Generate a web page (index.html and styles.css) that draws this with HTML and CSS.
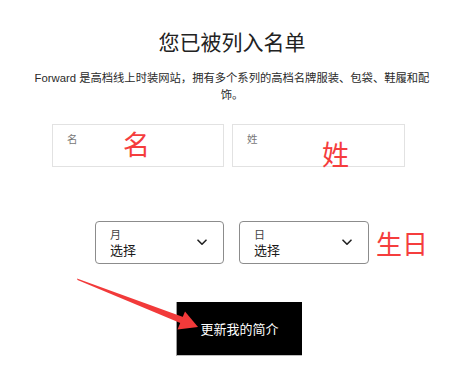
FILE: index.html
```html
<!DOCTYPE html>
<html lang="zh">
<head>
<meta charset="utf-8">
<link rel="stylesheet" href="styles.css">
</head>
<body>
<div class="page">
  <h1 class="title">您已被列入名单</h1>
  <p class="desc">Forward 是高档线上时装网站，拥有多个系列的高档名牌服装、包袋、鞋履和配饰。</p>

  <div class="name-row">
    <div class="field">
      <span class="field-label">名</span>
      <span class="note note-first">名</span>
    </div>
    <div class="field">
      <span class="field-label">姓</span>
      <span class="note note-last">姓</span>
    </div>
  </div>

  <div class="date-row">
    <div class="select">
      <div class="select-text">
        <span class="select-label">月</span>
        <span class="select-value">选择</span>
      </div>
      <svg class="chevron" viewBox="0 0 10 7" width="10" height="7"><polyline points="1,1.2 5,5.2 9,1.2" fill="none" stroke="#222" stroke-width="1.6" stroke-linecap="round" stroke-linejoin="round"/></svg>
    </div>
    <div class="select">
      <div class="select-text">
        <span class="select-label">日</span>
        <span class="select-value">选择</span>
      </div>
      <svg class="chevron" viewBox="0 0 10 7" width="10" height="7"><polyline points="1,1.2 5,5.2 9,1.2" fill="none" stroke="#222" stroke-width="1.6" stroke-linecap="round" stroke-linejoin="round"/></svg>
    </div>
    <span class="note-birthday">生日</span>
  </div>

  <div class="button-row">
    <button class="submit">更新我的简介</button>
  </div>

  <svg class="arrow" width="464" height="370" viewBox="0 0 464 370">
    <polygon points="77,278.5 184.5,317.5 181.5,323.5 77.5,280" fill="#f23a3a"/>
    <polygon points="198,327 185,311.5 177.5,329.5" fill="#f23a3a"/>
  </svg>
</div>
</body>
</html>
```

FILE: styles.css
```css
html, body {
  margin: 0;
  padding: 0;
  background: #fff;
}

body {
  width: 464px;
  height: 370px;
  overflow: hidden;
  font-family: "Liberation Sans", "Noto Sans CJK SC", sans-serif;
  color: #222;
}

.page {
  position: relative;
  width: 464px;
  height: 370px;
  display: flex;
  flex-direction: column;
}

.title {
  margin: 27px 0 0;
  font-size: 21px;
  line-height: 28px;
  font-weight: normal;
  text-align: center;
  color: #222;
  font-family: "Noto Sans CJK SC", sans-serif;
}

.desc {
  width: 404px;
  margin: 15px auto 0;
  font-size: 11.3px;
  line-height: 17px;
  text-align: center;
  color: #2a2a2a;
}

.name-row {
  display: flex;
  gap: 8px;
  margin: 20px 0 0 52px;
}

.field {
  position: relative;
  box-sizing: border-box;
  width: 172px;
  height: 43px;
  border: 1px solid #e2e2e2;
  padding: 7px 0 0 14px;
}

.field + .field {
  width: 173px;
}

.field-label {
  display: block;
  font-family: "Noto Sans CJK SC", sans-serif;
  font-size: 10.5px;
  line-height: 14px;
  color: #777;
}

.note {
  position: absolute;
  font-family: "Noto Sans CJK SC", sans-serif;
  font-size: 27px;
  line-height: 1;
  color: #f53d3d;
}

.note-first {
  left: 70px;
  top: 5px;
}

.note-last {
  left: 89px;
  top: 15px;
}

.date-row {
  display: flex;
  align-items: center;
  gap: 15px;
  margin: 54px 0 0 95px;
}

.select {
  box-sizing: border-box;
  width: 129px;
  height: 43px;
  border: 1px solid #8c8c8c;
  border-radius: 4px;
  display: flex;
  align-items: center;
  justify-content: space-between;
  padding: 0 16px 0 14px;
}

.select + .select {
  width: 130px;
}

.select-text {
  display: flex;
  flex-direction: column;
  font-family: "Liberation Sans", "Noto Sans CJK SC", sans-serif;
  margin-top: 1px;
}

.select-label {
  font-size: 11px;
  line-height: 14px;
  color: #444;
}

.select-value {
  font-size: 13px;
  line-height: 17px;
  color: #1a1a1a;
}

.chevron {
  display: block;
  margin-top: 0;
}

.note-birthday {
  margin-left: -8px;
  font-family: "Noto Sans CJK SC", sans-serif;
  font-size: 26px;
  line-height: 1;
  color: #f53d3d;
}

.button-row {
  display: flex;
  margin: 38px 0 0 176px;
}

.submit {
  box-sizing: border-box;
  width: 126px;
  height: 54px;
  background: #000;
  color: #fff;
  border: none;
  border-left: 1px solid #9a9a9a;
  border-bottom: 1px solid #bdbdbd;
  font-family: "Noto Sans CJK SC", sans-serif;
  font-size: 13px;
  padding: 0;
}

.arrow {
  position: absolute;
  left: 0;
  top: 0;
  pointer-events: none;
}
```
